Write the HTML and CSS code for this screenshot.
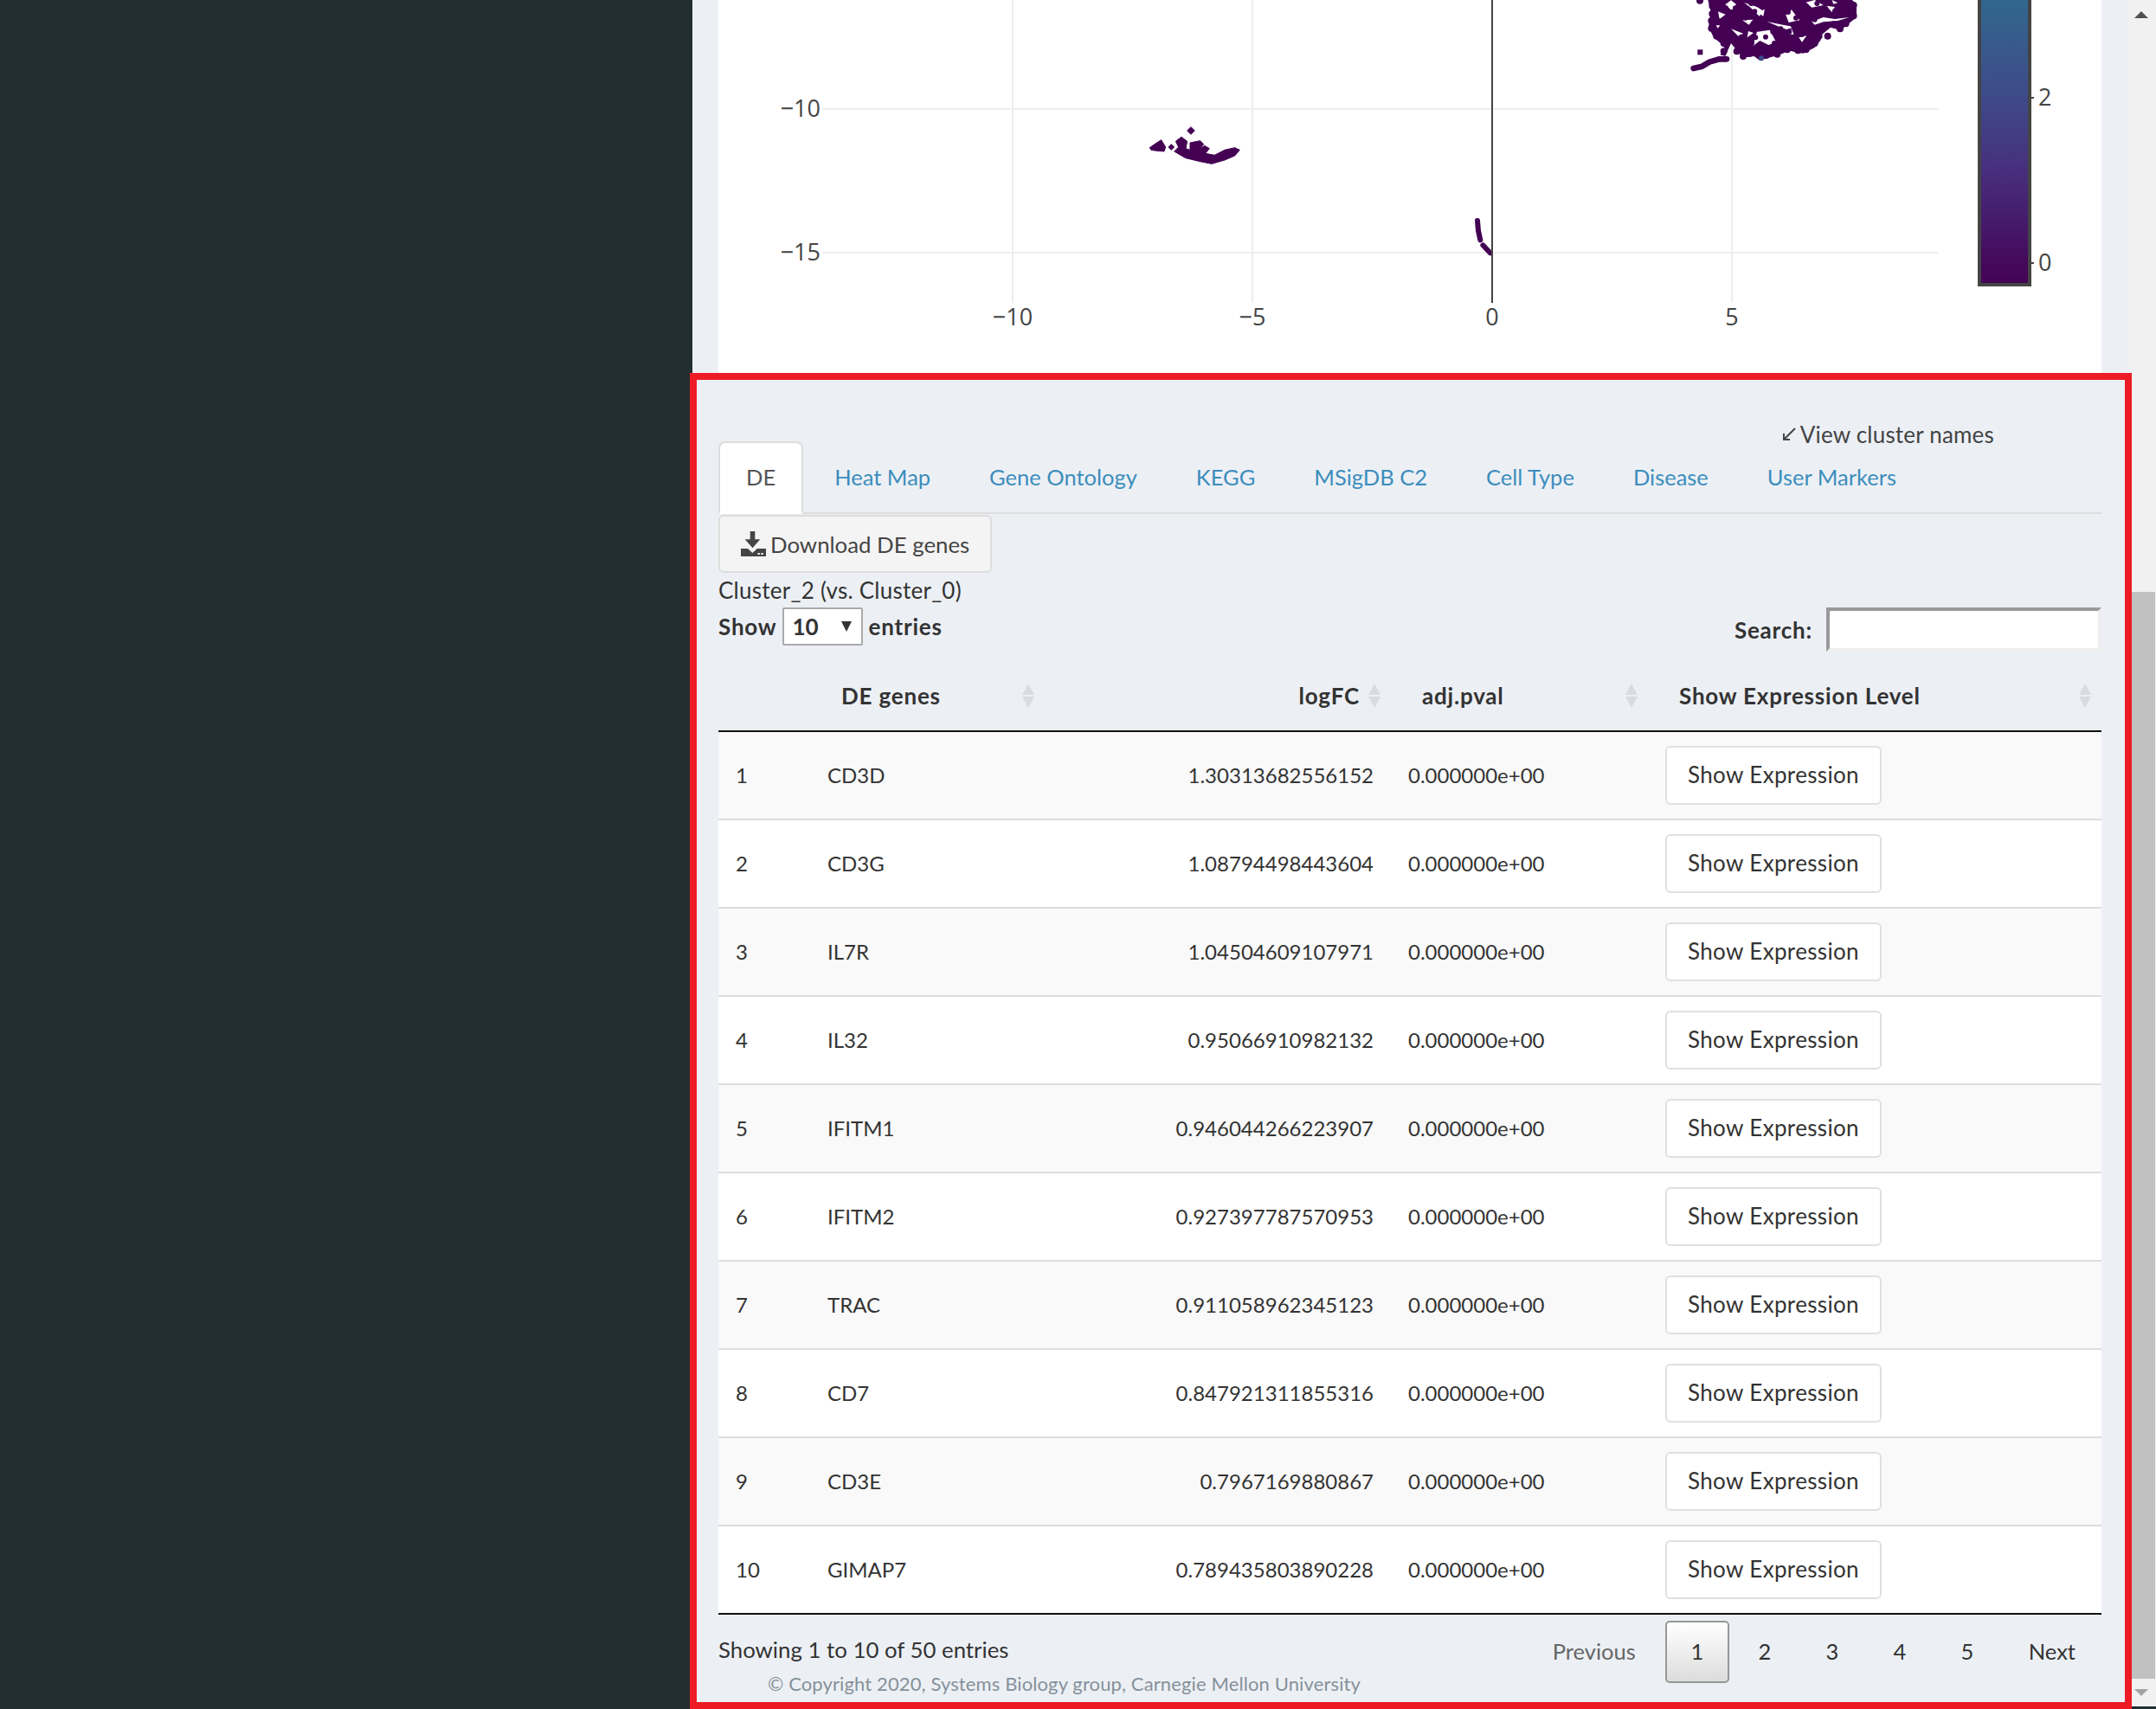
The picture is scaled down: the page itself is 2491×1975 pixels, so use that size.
FILE: index.html
```html
<!DOCTYPE html>
<html lang="en">
<head>
    <meta charset="UTF-8">
    <meta name="viewport" content="width=device-width, initial-scale=1.0">
    <title>Cluster DE genes</title>
    <link rel="stylesheet" href="styles.css">
</head>
<body>

    <aside class="sidebar"></aside>

    <main class="content">
        <section class="plot-box">
            <svg class="plot" width="1598" height="430" viewBox="0 0 1598 430">
                <defs>
                    <linearGradient id="viridis" x1="0" y1="1" x2="0" y2="0">
                        <stop offset="0" stop-color="#440154"/>
                        <stop offset="0.4" stop-color="#472f7d"/>
                        <stop offset="0.65" stop-color="#3e4a89"/>
                        <stop offset="1" stop-color="#31688e"/>
                    </linearGradient>
                </defs>

                <!-- grid -->
                <g class="grid">
                    <line x1="120" y1="126" x2="1410" y2="126"/>
                    <line x1="120" y1="292" x2="1410" y2="292"/>
                    <line x1="340" y1="0" x2="340" y2="350"/>
                    <line x1="617" y1="0" x2="617" y2="350"/>
                    <line x1="1171" y1="0" x2="1171" y2="350"/>
                </g>

                <!-- big cluster, drawn at 3x and scaled down -->
                <g transform="translate(1120 0) scale(0.3333)">
                    <path class="blob" d="M70 0L80 40L72 95L90 130L120 155L130 170L112 190L130 195L150 150L170 175L190 200L230 195L250 210L265 205L300 195L330 185L350 175L370 180L400 185L440 165L460 140L465 120L495 95L530 105L560 80L585 60L585 15L570 0Z"/>
                    <path class="dots" d="M42 2h0M85 20h0M85 48h0M82 72h0M82 98h0M100 125h0M125 150h0M125 178h0M170 178h0M192 195h0M215 185h0M235 178h0M272 192h0M310 188h0M345 172h0M382 175h0M410 172h0M440 150h0M455 125h0M485 125h0M528 100h0M548 82h0M575 55h0M575 18h0M530 8h0M385 3h0M263 105h0"/>
                    <path class="holes" d="M150 1L168 15L152 36L130 16ZM195 9L240 24L262 38L248 56L218 26ZM340 52L360 34L372 50L388 70L350 78ZM430 75L470 60L510 66L560 60L520 72L470 76L440 86ZM240 110L285 104L306 146L280 156L250 141L226 160ZM150 100L192 116L176 126ZM190 70L226 68L212 86ZM275 75L330 86L372 94L342 102L316 92ZM105 40L131 50L110 66ZM440 0L470 18L430 26L410 8ZM480 20L510 24L500 42ZM385 130L412 124L396 146ZM98 88L112 88L104 98ZM268 25L262 56L250 48ZM210 108L228 114L206 130ZM360 100L368 120L350 118ZM500 0L520 10L505 14Z"/>
                    <!-- single cells round the gaps -->
                    <path class="dots inner" d="M165 28h0M132 28h0M150 42h0M200 30h0M232 40h0M262 25h0M220 12h0M348 42h0M375 62h0M332 72h0M365 88h0M440 68h0M480 50h0M520 52h0M505 82h0M450 92h0M250 100h0M295 110h0M270 128h0M235 130h0M300 150h0M255 155h0M222 150h0M170 95h0M185 128h0M200 62h0M228 80h0M205 95h0M285 62h0M322 100h0M352 110h0M108 30h0M135 62h0M105 72h0M448 12h0M410 20h0M478 30h0M510 38h0M395 120h0M380 148h0"/>
                    <path class="tail" d="M20 237L50 230L75 215L110 205L135 205"/>
                    <rect class="blob" x="34" y="172" width="18" height="18"/>
                    <circle class="hi-dot" cx="255" cy="202" r="9"/>
                </g>

                <!-- small cluster -->
                <g transform="translate(490 140) scale(0.3333)">
                    <path class="blob small" d="M25 92L45 78L65 65L80 90L75 105L50 103L30 100ZM90 90L100 80L110 90L100 100ZM155 33L168 20L181 33L168 46ZM115 70L135 55L155 70L150 95L165 100L165 75L200 68L212 80L195 100L215 85L232 95L218 112L250 118L285 100L320 92L337 100L320 120L285 135L240 148L200 140L150 128L110 105L125 90Z"/>
                </g>

                <!-- stray cells next to zero line -->
                <g transform="translate(865 245) scale(0.3333)">
                    <path class="tail fat" d="M36 30L39 65L46 97M55 115L80 142"/>
                </g>

                <line class="zero" x1="894" y1="0" x2="894" y2="350"/>

                <!-- colour bar -->
                <rect class="cbar" x="1457" y="-4" width="58" height="333" fill="url(#viridis)"/>
                <line class="cbar-tick" x1="1517" y1="113" x2="1520" y2="113"/>
                <line class="cbar-tick" x1="1517" y1="304" x2="1520" y2="304"/>

                <g class="ticks">
                    <text x="118" y="135" text-anchor="end">−10</text>
                    <text x="118" y="301" text-anchor="end">−15</text>
                    <text x="340" y="376" text-anchor="middle">−10</text>
                    <text x="617" y="376" text-anchor="middle">−5</text>
                    <text x="894" y="376" text-anchor="middle">0</text>
                    <text x="1171" y="376" text-anchor="middle">5</text>
                    <text x="1525" y="122">2</text>
                    <text x="1525" y="313">0</text>
                </g>
            </svg>
        </section>

        <section class="panel">
            <div class="names-row">
                <span class="names-toggle">
                    <svg class="names-icon" width="18" height="18" viewBox="0 0 18 18"><path d="M16 2L3 15M3 8v7h7"/></svg>
                    View cluster names
                </span>
            </div>

            <ul class="tabs">
                <li><a class="active" href="#">DE</a></li>
                <li><a href="#">Heat Map</a></li>
                <li><a href="#">Gene Ontology</a></li>
                <li><a href="#">KEGG</a></li>
                <li><a href="#">MSigDB C2</a></li>
                <li><a href="#">Cell Type</a></li>
                <li><a href="#">Disease</a></li>
                <li><a href="#">User Markers</a></li>
            </ul>

            <button class="download-btn">
                <svg width="29" height="29" viewBox="0 0 29 29">
                    <path fill="#444" d="M10.7 0h5.6v9.3h6L13.5 19.3 4.7 9.3h6zM0 20h8l5.4 5 5.4-5H29v9H0z"/>
                    <path fill="#f4f4f4" d="M19.5 25h2.4v2h-2.4zM23.3 25h2.4v2h-2.4z"/>
                </svg>
                Download DE genes
            </button>

            <div class="cluster-title">Cluster_2 (vs. Cluster_0)</div>

            <div class="table-controls">
                <label class="length-ctl">Show
                    <span class="select-wrap">
                        <select>
                            <option>10</option>
                            <option>25</option>
                            <option>50</option>
                        </select>
                    </span>
                    entries</label>
                <label class="search-ctl">Search: <input type="search"></label>
            </div>

            <table class="de-table">
                <colgroup>
                    <col class="c-num"><col class="c-gene"><col class="c-fc"><col class="c-pval"><col class="c-expr">
                </colgroup>
                <thead>
                    <tr>
                        <th class="no-sort"></th>
                        <th>DE genes</th>
                        <th class="num">logFC</th>
                        <th>adj.pval</th>
                        <th>Show Expression Level</th>
                    </tr>
                </thead>
                <tbody>
                    <tr><td>1</td><td>CD3D</td><td class="num">1.30313682556152</td><td>0.000000e+00</td><td><button class="expr-btn">Show Expression</button></td></tr>
                    <tr><td>2</td><td>CD3G</td><td class="num">1.08794498443604</td><td>0.000000e+00</td><td><button class="expr-btn">Show Expression</button></td></tr>
                    <tr><td>3</td><td>IL7R</td><td class="num">1.04504609107971</td><td>0.000000e+00</td><td><button class="expr-btn">Show Expression</button></td></tr>
                    <tr><td>4</td><td>IL32</td><td class="num">0.95066910982132</td><td>0.000000e+00</td><td><button class="expr-btn">Show Expression</button></td></tr>
                    <tr><td>5</td><td>IFITM1</td><td class="num">0.946044266223907</td><td>0.000000e+00</td><td><button class="expr-btn">Show Expression</button></td></tr>
                    <tr><td>6</td><td>IFITM2</td><td class="num">0.927397787570953</td><td>0.000000e+00</td><td><button class="expr-btn">Show Expression</button></td></tr>
                    <tr><td>7</td><td>TRAC</td><td class="num">0.911058962345123</td><td>0.000000e+00</td><td><button class="expr-btn">Show Expression</button></td></tr>
                    <tr><td>8</td><td>CD7</td><td class="num">0.847921311855316</td><td>0.000000e+00</td><td><button class="expr-btn">Show Expression</button></td></tr>
                    <tr><td>9</td><td>CD3E</td><td class="num">0.7967169880867</td><td>0.000000e+00</td><td><button class="expr-btn">Show Expression</button></td></tr>
                    <tr><td>10</td><td>GIMAP7</td><td class="num">0.789435803890228</td><td>0.000000e+00</td><td><button class="expr-btn">Show Expression</button></td></tr>
                </tbody>
            </table>

            <div class="table-footer">
                <div class="table-info">Showing 1 to 10 of 50 entries</div>
                <div class="pager">
                    <a class="page wide disabled" href="#">Previous</a>
                    <a class="page current" href="#">1</a>
                    <a class="page" href="#">2</a>
                    <a class="page" href="#">3</a>
                    <a class="page" href="#">4</a>
                    <a class="page" href="#">5</a>
                    <a class="page wide" href="#">Next</a>
                </div>
            </div>

            <div class="copyright">© Copyright 2020, Systems Biology group, Carnegie Mellon University</div>
        </section>
    </main>

    <div class="scrollbar">
        <div class="sb-btn"><span class="sb-up"></span></div>
        <div class="sb-thumb"></div>
        <div class="sb-btn last"><span class="sb-down"></span></div>
    </div>

</body>
</html>
```

FILE: styles.css
```css
* {
    box-sizing: border-box;
}

html, body {
    height: 100%;
    overflow: hidden;
}

body {
    margin: 0;
    display: flex;
    background-color: #222d32;
    color: #333;
    font-family: Lato, "Noto Sans", sans-serif;
    font-size: 26px;
    line-height: 40px;
}

.sidebar {
    width: 800px;
    flex: none;
}

.content {
    width: 1658px;
    flex: none;
    background-color: #ecf0f5;
}

/* plot */
.plot-box {
    height: 431px;
    margin: 0 30px;
    background-color: white;
}

.plot {
    display: block;
}

.grid line {
    stroke: #eee;
    stroke-width: 2;
}

.zero {
    stroke: #444;
    stroke-width: 2;
}

.blob {
    fill: #440154;
}

.blob.small {
    stroke: #440154;
    stroke-width: 3;
}

.dots {
    fill: none;
    stroke: #440154;
    stroke-width: 24;
    stroke-linecap: round;
}

.dots.inner {
    stroke-width: 18;
}

.holes {
    fill: white;
}

.tail {
    fill: none;
    stroke: #440154;
    stroke-width: 20;
    stroke-linecap: round;
    stroke-linejoin: round;
}

.fat {
    stroke-width: 18;
}

.hi-dot {
    fill: #3e4a89;
}

.cbar {
    stroke: #444;
    stroke-width: 4;
}

.cbar-tick {
    stroke: #444;
    stroke-width: 2;
}

.ticks text {
    font-family: "Open Sans", sans-serif;
    font-size: 27px;
    fill: #444;
}

/* panel with the red frame */
.panel {
    position: relative;
    z-index: 1;
    height: 1544px;
    margin: 0 -5px 0 -3px;
    padding: 0 27px 0 25px;
    border: 8px solid #ed1c24;
    background-color: #ecf0f5;
}

.names-row {
    display: flex;
    justify-content: flex-end;
    height: 71px;
    padding: 43px 124px 0 0;
    color: #444;
    letter-spacing: 0.2px;
}

.names-toggle {
    display: flex;
    align-items: center;
    gap: 4px;
    height: 40px;
}

.names-icon {
    fill: none;
    stroke: #444;
    stroke-width: 2;
}

.tabs {
    display: flex;
    margin: 0;
    padding: 0;
    list-style: none;
    border-bottom: 2px solid #ddd;
    font-size: 25.5px;
}

.tabs li {
    margin-right: 4px;
}

.tabs a {
    display: block;
    height: 84px;
    margin-bottom: -2px;
    padding: 19px 30px 21px;
    border: 2px solid transparent;
    border-radius: 8px 8px 0 0;
    color: #3c8dbc;
    text-decoration: none;
}

.tabs a.active {
    background-color: white;
    border-color: #ddd;
    border-bottom-color: white;
    color: #555;
}

.download-btn {
    display: flex;
    align-items: center;
    gap: 5px;
    width: 316px;
    height: 67px;
    margin-top: 1px;
    padding: 0 0 0 24px;
    background-color: #f4f4f4;
    border: 2px solid #ddd;
    border-radius: 6px;
    color: #444;
    font: inherit;
    font-size: 25.8px;
}

.cluster-title {
    height: 40px;
    letter-spacing: 0.25px;
}

.table-controls {
    display: flex;
    justify-content: space-between;
    height: 51px;
    font-weight: 700;
    letter-spacing: 0.8px;
}

.length-ctl {
    display: flex;
    align-items: center;
    gap: 7px;
    height: 44px;
}

.select-wrap {
    position: relative;
    display: block;
    margin-left: -1px;
}

.select-wrap::after {
    content: "";
    position: absolute;
    top: 16px;
    right: 13px;
    border-top: 12px solid #333;
    border-left: 6px solid transparent;
    border-right: 6px solid transparent;
}

.select-wrap select {
    display: block;
    width: 93px;
    height: 44px;
    padding: 0 0 0 10px;
    appearance: none;
    background-color: white;
    border: 2px solid #aaa;
    border-radius: 2px;
    color: #333;
    font: inherit;
}

.search-ctl {
    display: flex;
    align-items: center;
    gap: 16px;
    height: 51px;
}

.search-ctl input {
    width: 318px;
    height: 51px;
    background-color: white;
    border-style: solid;
    border-width: 4px;
    border-color: #999 #eee #eee #999;
}

.de-table {
    width: 1598px;
    table-layout: fixed;
    border-collapse: separate;
    border-spacing: 0;
}

.c-num { width: 106px; }
.c-gene { width: 271px; }
.c-fc { width: 400px; }
.c-pval { width: 297px; }
.c-expr { width: 524px; }

.de-table th {
    position: relative;
    height: 93px;
    padding: 0 36px 20px;
    vertical-align: bottom;
    text-align: left;
    border-bottom: 2px solid #111;
    letter-spacing: 0.8px;
}

.de-table th.num {
    text-align: right;
}

/* sort arrows */
.de-table th::before,
.de-table th::after {
    content: "";
    position: absolute;
    right: 12px;
    border-left: 7px solid transparent;
    border-right: 7px solid transparent;
}

.de-table th::before {
    top: 37px;
    border-bottom: 13px solid #d8dbdf;
}

.de-table th::after {
    top: 52px;
    border-top: 13px solid #d8dbdf;
}

.de-table th.no-sort::before,
.de-table th.no-sort::after {
    display: none;
}

.de-table td {
    height: 102px;
    padding: 0 20px;
    background-color: white;
    border-bottom: 2px solid #ddd;
    font-size: 24px;
}

.de-table tbody tr:nth-child(odd) td {
    background-color: #f9f9f9;
}

.de-table tbody tr:last-child td {
    border-bottom-color: #111;
}

.de-table td.num {
    text-align: right;
}

.expr-btn {
    display: block;
    width: 250px;
    height: 68px;
    padding: 0 0 3px;
    background-color: white;
    border: 2px solid #e0e0e0;
    border-radius: 6px;
    color: #333;
    font-family: inherit;
    font-size: 26px;
    letter-spacing: 0.35px;
}

.table-footer {
    display: flex;
    justify-content: space-between;
    height: 79px;
    padding-top: 7px;
}

.table-info {
    margin-top: 13px;
    font-size: 25.8px;
}

.pager {
    display: flex;
    font-size: 25.5px;
}

.page {
    display: block;
    width: 74px;
    height: 72px;
    margin-left: 4px;
    border: 2px solid transparent;
    border-radius: 5px;
    color: #333;
    line-height: 66px;
    text-align: center;
    text-decoration: none;
}

.page.wide {
    width: auto;
    padding: 0 28px;
}

.page.disabled {
    color: #666;
}

.page.current {
    background: linear-gradient(#fff, #dcdcdc);
    border-color: #979797;
}

.copyright {
    margin-top: -16px;
    padding-left: 57px;
    color: #869099;
    font-size: 22px;
    line-height: 34px;
    letter-spacing: 0.12px;
}

/* page scrollbar */
.scrollbar {
    width: 33px;
    height: 1972px;
    flex: none;
    padding-left: 5px;
    padding-right: 1px;
    background-color: #f1f1f1;
}

.sb-btn {
    display: flex;
    align-items: center;
    justify-content: center;
    height: 34px;
    margin-left: -5px;
}

.sb-btn.last {
    height: 32px;
}

.sb-up {
    border-bottom: 8px solid #505050;
    border-left: 8px solid transparent;
    border-right: 8px solid transparent;
}

.sb-down {
    border-top: 8px solid #a3a3a3;
    border-left: 8px solid transparent;
    border-right: 8px solid transparent;
}

.sb-thumb {
    height: 1256px;
    margin-top: 650px;
    background-color: #c1c1c1;
}
```
